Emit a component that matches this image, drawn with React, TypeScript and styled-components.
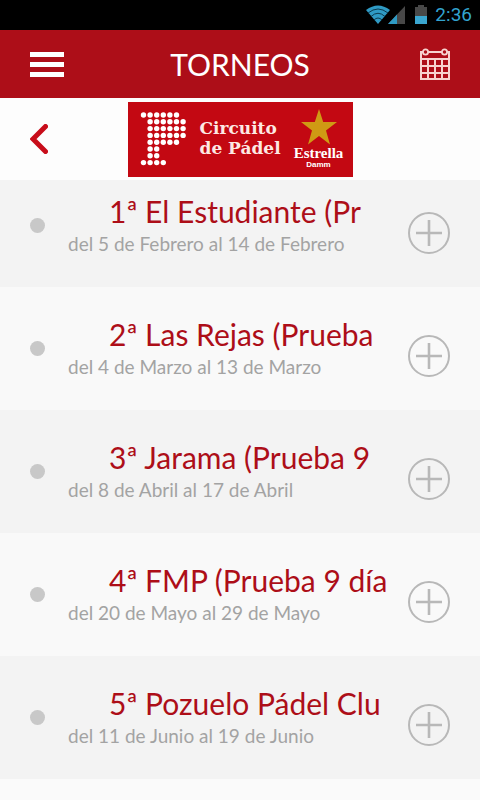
import React from 'react';
import styled, { createGlobalStyle } from 'styled-components';

const GlobalStyle = createGlobalStyle`
  * { box-sizing: border-box; }
  body {
    margin: 0;
    background: #fafafa;
    font-family: Lato, "Liberation Sans", sans-serif;
  }
  button { border: 0; padding: 0; background: none; cursor: pointer; font: inherit; }
  svg { display: block; }
`;

const Screen = styled.div`
  min-height: 100vh;
  background: #fafafa;
`;

const StatusBar = styled.div`
  display: flex;
  align-items: center;
  justify-content: flex-end;
  height: 30px;
  padding-right: 8px;
  background: #000;
`;

const Clock = styled.time`
  margin-left: 7px;
  color: #33a4cf;
  font: 19px/30px Roboto, sans-serif;
`;

const TopBar = styled.header`
  display: grid;
  grid-template-columns: 34px 1fr 30px;
  align-items: center;
  height: 68px;
  padding: 0 30px;
  background: #ad0e18;
`;

const PageTitle = styled.h1`
  margin: 0;
  padding-right: 4px;
  color: #fff;
  font-size: 30px;
  font-weight: 400;
  line-height: 68px;
  text-align: center;
`;

const BackBar = styled.div`
  display: grid;
  grid-template-columns: 34px 1fr 34px;
  align-items: center;
  height: 82px;
  padding: 0 30px;
  background: #fdfdfd;
`;

const Banner = styled.div`
  display: flex;
  justify-self: center;
  width: 225px;
  height: 75px;
  padding: 0 9px 0 12px;
  background: #c30812;
  color: #fff;
`;

const Dots = styled.svg`
  flex: none;
  margin-top: 9px;
`;

const CircuitName = styled.div`
  flex: 1;
  padding: 16px 0 0 12px;
  color: #fde9e4;
  font: bold 17px/20px "DejaVu Serif", serif;
  white-space: nowrap;
`;

const Sponsor = styled.div`
  display: flex;
  flex-direction: column;
  align-items: center;
  width: 50px;
  padding-top: 7px;
`;

const SponsorName = styled.span`
  font: bold 15px/16px "Liberation Serif", serif;
`;

const SponsorCity = styled.span`
  font: bold 8px/8px "Liberation Sans", sans-serif;
`;

const List = styled.ul`
  margin: 0;
  padding: 0;
  list-style: none;
`;

const Row = styled.li`
  display: grid;
  grid-template-columns: 15px 1fr 42px;
  column-gap: 23px;
  align-items: center;
  height: 123px;
  padding: 0 30px;
  background: #f9f9f9;

  &:nth-child(odd) { background: #f3f3f3; }
  &:first-child { height: 107px; padding-bottom: 16px; }
`;

const Bullet = styled.span`
  width: 15px;
  height: 15px;
  border-radius: 50%;
  background: #c8c8c8;
`;

const Info = styled.div`
  min-width: 0;
`;

const Name = styled.h2`
  margin: 0;
  padding-left: 41px;
  color: #ad0e18;
  font-size: 30px;
  font-weight: 400;
  line-height: 36px;
  white-space: nowrap;
`;

const Dates = styled.p`
  margin: 0;
  color: #a3a3a3;
  font-size: 19px;
  line-height: 30px;
  white-space: nowrap;
`;

const AddButton = styled.button`
  margin-top: 15px;
`;

const dotRows = [
  [0, 1, 2, 3, 4, 5],
  [1, 2, 3, 4, 5, 6],
  [1, 2, 3, 4, 5, 6],
  [1, 2, 3, 4, 5, 6],
  [1, 2, 3, 4, 5],
  [1, 2],
  [1, 2],
  [0, 1, 2, 3],
];

const tournaments = [
  { name: '1ª El Estudiante (Pr', dates: 'del 5 de Febrero al 14 de Febrero' },
  { name: '2ª Las Rejas (Prueba', dates: 'del 4 de Marzo al 13 de Marzo' },
  { name: '3ª Jarama (Prueba 9', dates: 'del 8 de Abril al 17 de Abril' },
  { name: '4ª FMP (Prueba 9 día', dates: 'del 20 de Mayo al 29 de Mayo' },
  { name: '5ª Pozuelo Pádel Clu', dates: 'del 11 de Junio al 19 de Junio' },
];

function StatusIcons() {
  return (
    <svg width="62" height="20" viewBox="0 0 62 20" aria-hidden="true">
      <path d="M0 5 Q12 -4 24 5 L12 19Z" fill="#2f9ac4" />
      <path d="M2 8 Q12 0 22 8 M5 11.500 Q12 5 19 11.500 M8 15 Q12 11 16 15" fill="none" stroke="#0b3a4d" strokeWidth="1" />
      <path d="M39 1V19H22Z" fill="#484848" />
      <path d="M31 9.500V19H22Z" fill="#2f9ac4" />
      <path d="M52 0H58V2H61V19H49V2H52Z" fill="#484848" />
      <path d="M49 11H61V19H49Z" fill="#3aa6d0" />
    </svg>
  );
}

function MenuIcon() {
  return (
    <svg width="34" height="25" viewBox="0 0 34 25" aria-hidden="true">
      <path d="M0 0H34V5H0ZM0 10H34V15H0ZM0 20H34V25H0Z" fill="#fff" />
    </svg>
  );
}

function CalendarIcon() {
  return (
    <svg width="30" height="32" viewBox="0 0 30 32" fill="none" stroke="#f7d3cf" aria-hidden="true">
      <path d="M3 4H1V31H29V4H27M8 4H22" strokeWidth="2" />
      <circle cx="5.500" cy="4" r="2.600" strokeWidth="1.800" />
      <circle cx="24.500" cy="4" r="2.600" strokeWidth="1.800" />
      <path d="M1 11H29M1 18H29M1 25H29M8 11V31M15 11V31M22 11V31" strokeWidth="2" />
    </svg>
  );
}

function BackIcon() {
  return (
    <svg width="18" height="30" viewBox="0 0 18 30" aria-hidden="true">
      <path d="M15.500 2.500L3 15L15.500 27.500" fill="none" stroke="#c80d1a" strokeWidth="5" strokeLinecap="round" />
    </svg>
  );
}

function PlusIcon() {
  return (
    <svg width="42" height="42" viewBox="0 0 42 42" fill="none" stroke="#b8b8b8" strokeWidth="2" aria-hidden="true">
      <circle cx="21" cy="21" r="20" />
      <path d="M8 21H34M21 8V34" strokeWidth="2.600" />
    </svg>
  );
}

export default function App() {
  return (
    <Screen>
      <GlobalStyle />
      <StatusBar>
        <StatusIcons />
        <Clock>2:36</Clock>
      </StatusBar>
      <TopBar>
        <button aria-label="Menú"><MenuIcon /></button>
        <PageTitle>TORNEOS</PageTitle>
        <button aria-label="Calendario"><CalendarIcon /></button>
      </TopBar>
      <BackBar>
        <button aria-label="Volver"><BackIcon /></button>
        <Banner>
          <Dots width="48" height="56" viewBox="0 0 48 56" aria-hidden="true">
            {dotRows.map((row, y) =>
              row.map((x) => (
                <circle key={`${x}-${y}`} cx={3.5 + x * 6.6} cy={4 + y * 6.8} r="2.700" fill="#fff" />
              )),
            )}
          </Dots>
          <CircuitName>Circuito<br />de Pádel</CircuitName>
          <Sponsor>
            <svg width="36" height="36" viewBox="0 0 36 36" aria-hidden="true">
              <path d="M18 0L22.200 13H36L25 21.500L29 35.500L18 27L7 35.500L11 21.500L0 13H13.800Z" fill="#cf9a14" />
            </svg>
            <SponsorName>Estrella</SponsorName>
            <SponsorCity>Damm</SponsorCity>
          </Sponsor>
        </Banner>
      </BackBar>
      <List>
        {tournaments.map((t) => (
          <Row key={t.name}>
            <Bullet />
            <Info>
              <Name>{t.name}</Name>
              <Dates>{t.dates}</Dates>
            </Info>
            <AddButton aria-label={`Ver ${t.name}`}><PlusIcon /></AddButton>
          </Row>
        ))}
      </List>
    </Screen>
  );
}
